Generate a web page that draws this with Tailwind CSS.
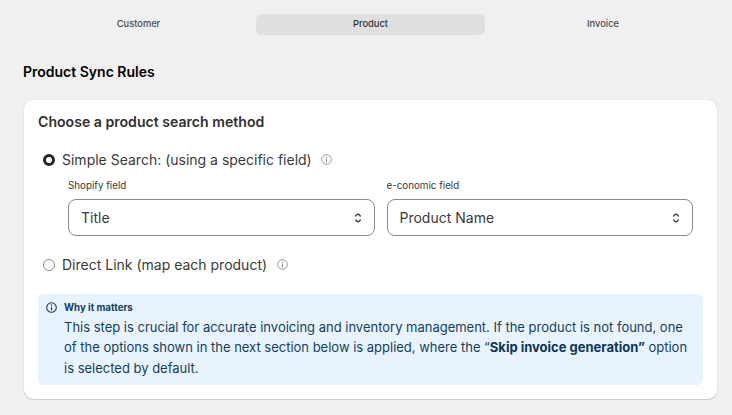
<!DOCTYPE html>
<html lang="en">
<head>
    <meta charset="UTF-8">
    <meta name="viewport" content="width=device-width, initial-scale=1.0">
    <title>Product Sync Rules</title>
    <script src="https://cdn.jsdelivr.net/npm/@tailwindcss/browser@4"></script>
</head>
<body class="h-[415px] overflow-hidden bg-[#f0f0f0] pt-3.5 pl-6 pr-[15px] font-['Inter',sans-serif] text-[#303030]">
    <!-- Tabs -->
    <nav class="grid grid-cols-3 gap-[3px] text-center text-[9.3px] leading-[18px] font-medium">
        <button class="h-[21px] rounded-md pb-0.5 text-[#4a4a4a]">Customer</button>
        <button class="h-[21px] rounded-md bg-[#dfdfdf] pb-0.5">Product</button>
        <button class="h-[21px] rounded-md pb-0.5 pl-px text-[#4a4a4a]">Invoice</button>
    </nav>

    <h1 class="-ml-px mt-[27px] text-[14px] leading-5 font-semibold text-black">Product Sync Rules</h1>

    <!-- Search method card -->
    <section class="mt-[18px] h-[299px] rounded-[9px] bg-white px-3.5 pt-3 shadow-[0_1px_1px_rgba(0,0,0,0.14),0_0_1px_rgba(0,0,0,0.2)]">
        <h2 class="text-[14.1px] leading-5 font-semibold">Choose a product search method</h2>

        <label class="mt-[17px] flex h-5 items-center pl-[5px] text-[14px] text-[#3a3a3a]">
            <input type="radio" name="method" class="mt-0.5 size-3 appearance-none rounded-full border-[3.5px] border-[#252525] bg-white" checked>
            <span class="ml-[7px]">Simple Search: (using a specific field)</span>
            <svg class="ml-[9px] size-[11px] text-[#8a8a8a]" viewBox="0 0 11 11" fill="none" stroke="currentColor">
                <circle cx="5.5" cy="5.5" r="4.8" stroke-width="0.9"/>
                <path d="M5.5 5v3" stroke-linecap="round"/>
                <circle cx="5.5" cy="3.2" r="0.65" fill="currentColor" stroke="none"/>
            </svg>
        </label>

        <div class="mt-2.5 grid grid-cols-2 gap-3 pr-2.5 pl-[30px] text-[#3a3a3a]">
            <div>
                <div class="text-[9.8px] leading-[14px]">Shopify field</div>
                <div class="mt-1.5 flex h-[37px] items-center justify-between rounded-lg border border-[#8a8a8a] px-3 text-[14px]">
                    <span>Title</span>
                    <svg class="h-[10px] w-2" viewBox="0 0 8 10" fill="none" stroke="#4a4a4a" stroke-width="1.5" stroke-linecap="round" stroke-linejoin="round">
                        <path d="M1.7 3 3.3 1.3h1.4L6.3 3M1.7 7l1.6 1.7h1.4L6.3 7"/>
                    </svg>
                </div>
            </div>
            <div>
                <div class="text-[9.8px] leading-[14px]">e-conomic field</div>
                <div class="mt-1.5 flex h-[37px] items-center justify-between rounded-lg border border-[#8a8a8a] px-3 text-[14px]">
                    <span>Product Name</span>
                    <svg class="h-[10px] w-2" viewBox="0 0 8 10" fill="none" stroke="#4a4a4a" stroke-width="1.5" stroke-linecap="round" stroke-linejoin="round">
                        <path d="M1.7 3 3.3 1.3h1.4L6.3 3M1.7 7l1.6 1.7h1.4L6.3 7"/>
                    </svg>
                </div>
            </div>
        </div>

        <label class="mt-[18px] flex h-5 items-center pl-[5px] text-[14px] text-[#3a3a3a]">
            <input type="radio" name="method" class="mt-px size-3 appearance-none rounded-full border border-[#8a8a8a] bg-white">
            <span class="ml-[7px]">Direct Link (map each product)</span>
            <svg class="ml-2.5 size-[11px] text-[#8a8a8a]" viewBox="0 0 11 11" fill="none" stroke="currentColor">
                <circle cx="5.5" cy="5.5" r="4.8" stroke-width="0.9"/>
                <path d="M5.5 5v3" stroke-linecap="round"/>
                <circle cx="5.5" cy="3.2" r="0.65" fill="currentColor" stroke="none"/>
            </svg>
        </label>

        <!-- Info banner -->
        <div class="mt-5 flex h-[91px] rounded-md bg-[#e8f3fe] pt-2 pl-2 text-[#143f5c]">
            <svg class="size-[11px] shrink-0" viewBox="0 0 11 11" fill="none" stroke="currentColor">
                <circle cx="5.5" cy="5.5" r="4.8" stroke-width="1.1"/>
                <path d="M5.5 5v3" stroke-width="1.1" stroke-linecap="round"/>
                <circle cx="5.5" cy="3.1" r="0.75" fill="currentColor" stroke="none"/>
            </svg>
            <div class="ml-[7px] whitespace-nowrap">
                <div class="text-[9.7px] leading-3 font-bold">Why it matters</div>
                <p class="mt-[3px] text-[12.99px] leading-[20.4px]">
                    This step is crucial for accurate invoicing and inventory management. If the product is not found, one<br>
                    of the options shown in the next section below is applied, where the “<strong class="text-[#0c3654]">Skip invoice generation”</strong> option<br>
                    is selected by default.
                </p>
            </div>
        </div>
    </section>
</body>
</html>
